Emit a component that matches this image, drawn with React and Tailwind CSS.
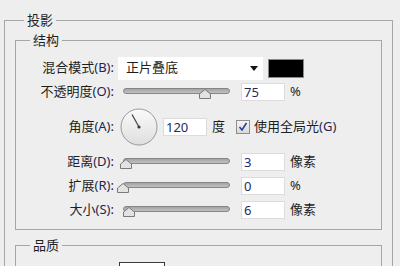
import React from 'react'

const font = { fontFamily: '"Noto Sans", "Noto Sans CJK SC", sans-serif' }

function Label({ text, hint }) {
    return (
        <div className="w-[98px] shrink-0 text-right text-[13px] text-[#1e1e1e] whitespace-nowrap">
            {text}<span className="text-[#1f2650]">({hint})</span>:
        </div>
    )
}

function Slider({ pos }) {
    return (
        <div className="relative ml-[9px] w-[107px] h-[14px] shrink-0">
            <div className="absolute left-0 right-0 top-[3px] h-[6px] rounded-full border border-[#858585] bg-gradient-to-b from-[#a3a3a3] to-[#c2c2c2]" />
            <svg className="absolute top-[4px]" style={{ left: pos - 6 }} width="12" height="10" viewBox="0 0 12 10">
                <path d="M0.5 9.5 L0.5 5 L6 0.5 L11.5 5 L11.5 9.5 Z" fill="#e2e2e2" stroke="#7a7a7a" strokeWidth="1" />
            </svg>
        </div>
    )
}

function Field({ value, className = '' }) {
    return (
        <div className={`h-[18px] w-[44px] shrink-0 bg-white border border-[#dcdcdc] pl-[2px] text-[13px] leading-[16px] text-[#1d2a66] ${className}`}>
            {value}
        </div>
    )
}

function SliderRow({ text, hint, pos, value, unit, h }) {
    return (
        <div className={`flex items-center ${h}`}>
            <Label text={text} hint={hint} />
            <Slider pos={pos} />
            <Field value={value} className="ml-[11px]" />
            <span className="ml-[5px] text-[13px] text-[#1e1e1e]">{unit}</span>
        </div>
    )
}

function Dial() {
    return (
        <svg width="38" height="38" viewBox="0 0 38 38" className="ml-[6px] shrink-0">
            <defs>
                <linearGradient id="dialg" x1="0" y1="0" x2="0" y2="1">
                    <stop offset="0" stopColor="#fafafa" />
                    <stop offset="1" stopColor="#dedede" />
                </linearGradient>
            </defs>
            <circle cx="19" cy="19" r="18" fill="url(#dialg)" stroke="#9a9a9a" />
            <line x1="19" y1="19" x2="12" y2="6.5" stroke="#4a4a4a" strokeWidth="1.3" />
            <circle cx="19" cy="19" r="1.6" fill="#3a3a3a" />
        </svg>
    )
}

export default function App() {
    return (
        <div className="w-[400px] h-[266px] overflow-hidden bg-[#eeeeee] pt-[11px] pl-[4px]" style={font}>
            <fieldset className="w-[389px] h-[300px] border border-[#a6a6a6] px-[10px] pt-[2px]">
                <legend className="ml-[9px] px-[3px] text-[13px] leading-[18px] text-[#1e1e1e]">投影</legend>

                <fieldset className="border border-[#a6a6a6] pt-[7px] pb-[7px]">
                    <legend className="ml-[14px] px-[3px] text-[13px] leading-[18px] text-[#1e1e1e]">结构</legend>

                    <div className="flex items-center h-[24px]">
                        <Label text="混合模式" hint="B" />
                        <div className="ml-[4px] flex h-[23px] w-[145px] shrink-0 items-center justify-between bg-white pl-[8px] pr-[5px] text-[13px] text-[#1e1e1e]">
                            <span>正片叠底</span>
                            <svg width="8" height="5" viewBox="0 0 8 5"><path d="M0 0 L8 0 L4 5 Z" fill="#111" /></svg>
                        </div>
                        <div className="ml-[5px] h-[19px] w-[36px] shrink-0 bg-black border border-[#8a8a8a]" />
                    </div>

                    <SliderRow text="不透明度" hint="O" pos={82} value="75" unit="%" h="h-[23px]" />

                    <div className="flex items-center h-[47px]">
                        <Label text="角度" hint="A" />
                        <Dial />
                        <Field value="120" className="ml-[5px]" />
                        <span className="ml-[5px] text-[13px] text-[#1e1e1e]">度</span>
                        <div className="ml-[11px] flex h-[14px] w-[14px] shrink-0 items-center justify-center border border-[#8e8e8e] bg-gradient-to-b from-[#f4f4f4] to-[#d8d8d8]">
                            <svg width="10" height="10" viewBox="0 0 10 10"><path d="M1.5 5 L4 8 L8.5 1" fill="none" stroke="#2b3f9a" strokeWidth="1.6" /></svg>
                        </div>
                        <span className="ml-[4px] text-[13px] text-[#1e1e1e] whitespace-nowrap">使用全局光<span className="text-[#1f2650]">(G)</span></span>
                    </div>

                    <SliderRow text="距离" hint="D" pos={3} value="3" unit="像素" h="h-[24px]" />
                    <SliderRow text="扩展" hint="R" pos={0} value="0" unit="%" h="h-[24px]" />
                    <SliderRow text="大小" hint="S" pos={6} value="6" unit="像素" h="h-[24px]" />
                </fieldset>

                <fieldset className="mt-[6px] h-[60px] border border-[#a6a6a6] pt-[8px]">
                    <legend className="ml-[14px] px-[3px] text-[13px] leading-[18px] text-[#1e1e1e]">品质</legend>
                    <div className="ml-[103px] h-[30px] w-[46px] border border-[#3a3a3a] bg-white" />
                </fieldset>
            </fieldset>
        </div>
    )
}
